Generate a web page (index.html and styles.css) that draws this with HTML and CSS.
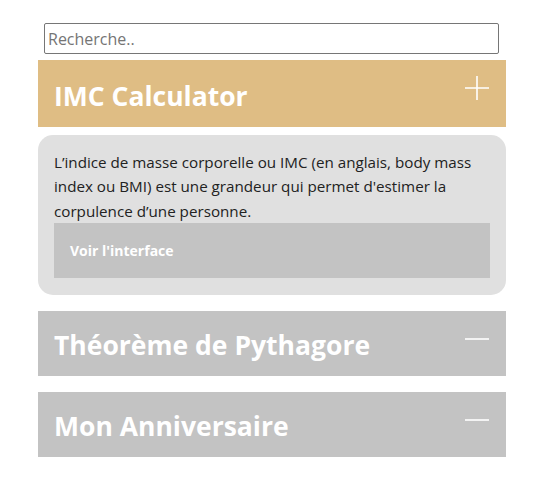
FILE: index.html
```html
<!DOCTYPE html>
<html lang="fr">
<head>
<meta charset="utf-8">
<link rel="stylesheet" href="styles.css">
</head>
<body>
<div class="page">
  <input class="search" type="text" placeholder="Recherche..">
  <div class="item">
    <div class="head head-open">
      <span class="title">IMC Calculator</span>
      <svg class="icon" viewBox="0 0 26 26" width="26" height="26"><path d="M13 1V25M1 13H25" stroke="#fff" stroke-width="1.6" fill="none"/></svg>
    </div>
    <div class="panel">
      <p class="desc">L’indice de masse corporelle ou IMC (en anglais, body mass index ou BMI) est une grandeur qui permet d'estimer la corpulence d’une personne.</p>
      <div class="btn">Voir l'interface</div>
    </div>
  </div>
  <div class="item">
    <div class="head">
      <span class="title">Théorème de Pythagore</span>
      <svg class="icon" viewBox="0 0 26 26" width="26" height="26"><path d="M1 13H25" stroke="#fff" stroke-width="1.6" fill="none"/></svg>
    </div>
  </div>
  <div class="item">
    <div class="head">
      <span class="title">Mon Anniversaire</span>
      <svg class="icon" viewBox="0 0 26 26" width="26" height="26"><path d="M1 13H25" stroke="#fff" stroke-width="1.6" fill="none"/></svg>
    </div>
  </div>
</div>
</body>
</html>
```
FILE: styles.css
```css
html, body {
  margin: 0;
  padding: 0;
  background: #fff;
}
body {
  font-family: "Open Sans", "Noto Sans", sans-serif;
}
.page {
  width: 468px;
  margin-left: 38px;
  padding-top: 23px;
  display: flex;
  flex-direction: column;
}
.search {
  box-sizing: border-box;
  width: 455px;
  height: 31px;
  margin: 0 0 6px 6px;
  border: 1px solid #767676;
  border-radius: 2px;
  padding: 0 3px;
  font-family: "Open Sans", sans-serif;
  font-size: 16px;
  color: #333;
}
.search::placeholder {
  color: #757575;
}
.item {
  margin-bottom: 16px;
}
.head {
  height: 65px;
  background: #c3c3c3;
  display: flex;
  align-items: center;
  justify-content: space-between;
  padding: 0 16px 0 16px;
}
.head-open {
  height: 67px;
  background: #dfbd84;
  margin-bottom: 8px;
}
.title {
  color: #fff;
  font-weight: 700;
  font-size: 26.5px;
  padding-top: 4px;
}
.head .icon {
  margin-top: -8px;
}
.head-open .icon {
  margin-top: -12px;
}
.panel {
  background: #e0e0e0;
  border-radius: 15px;
  padding: 15px 16px 17px 16px;
}
.desc {
  margin: 0;
  font-size: 15.2px;
  line-height: 24.3px;
  color: #222;
}
.btn {
  height: 55px;
  background: #c3c3c3;
  color: #fff;
  font-weight: 700;
  font-size: 14px;
  display: flex;
  align-items: center;
  padding-left: 16px;
}
```
